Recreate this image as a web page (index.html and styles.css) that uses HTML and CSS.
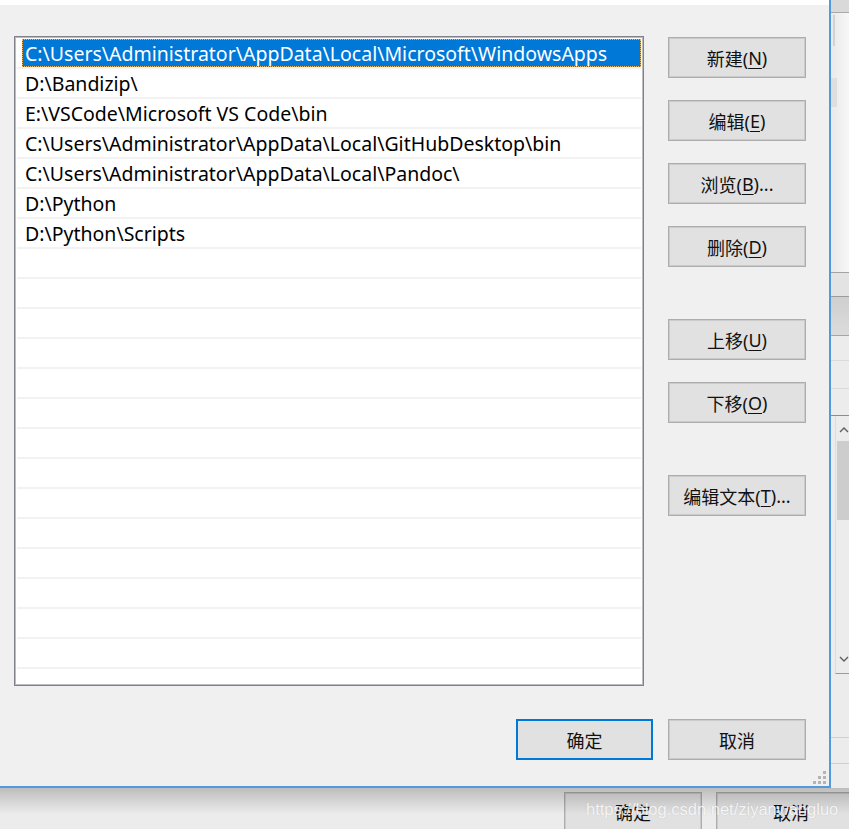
FILE: index.html
```html
<!DOCTYPE html>
<html lang="zh-CN">
<head>
<meta charset="utf-8">
<title>编辑环境变量</title>
<link rel="stylesheet" href="styles.css">
</head>
<body>
<div class="screen">
  <div class="top">
    <div class="dialog">
      <div class="strip"></div>
      <div class="body">
        <div class="listbox">
          <div class="row sel"><div class="item">C:\Users\Administrator\AppData\Local\Microsoft\WindowsApps</div></div>
          <div class="row"><div class="item">D:\Bandizip\</div></div>
          <div class="row"><div class="item">E:\VSCode\Microsoft VS Code\bin</div></div>
          <div class="row"><div class="item">C:\Users\Administrator\AppData\Local\GitHubDesktop\bin</div></div>
          <div class="row"><div class="item">C:\Users\Administrator\AppData\Local\Pandoc\</div></div>
          <div class="row"><div class="item">D:\Python</div></div>
          <div class="row"><div class="item">D:\Python\Scripts</div></div>
          <div class="row"></div><div class="row"></div><div class="row"></div><div class="row"></div>
          <div class="row"></div><div class="row"></div><div class="row"></div><div class="row"></div>
          <div class="row"></div><div class="row"></div><div class="row"></div><div class="row"></div>
          <div class="row"></div><div class="row"></div><div class="row"></div>
        </div>
        <div class="side">
          <button class="btn">新建(<u>N</u>)</button>
          <button class="btn">编辑(<u>E</u>)</button>
          <button class="btn">浏览(<u>B</u>)...</button>
          <button class="btn">删除(<u>D</u>)</button>
          <button class="btn gap-lg">上移(<u>U</u>)</button>
          <button class="btn">下移(<u>O</u>)</button>
          <button class="btn gap-lg">编辑文本(<u>T</u>)...</button>
        </div>
      </div>
      <div class="footer">
        <button class="btn default">确定</button>
        <button class="btn">取消</button>
      </div>
      <svg class="grip" width="15" height="15" viewBox="0 0 15 15">
        <rect x="11" y="1" width="3" height="3" fill="#b4b4b4"/>
        <rect x="6" y="6" width="3" height="3" fill="#b4b4b4"/>
        <rect x="11" y="6" width="3" height="3" fill="#b4b4b4"/>
        <rect x="1" y="11" width="3" height="3" fill="#b4b4b4"/>
        <rect x="6" y="11" width="3" height="3" fill="#b4b4b4"/>
        <rect x="11" y="11" width="3" height="3" fill="#b4b4b4"/>
      </svg>
    </div>
    <div class="behind">
      <div class="seg s-head"></div>
      <div class="seg s-pane"><div class="pane-line"></div><div class="pane-block"></div></div>
      <div class="seg s-a"></div>
      <div class="seg s-b"></div>
      <div class="seg s-c"></div>
      <div class="seg s-d"></div>
      <div class="seg s-e"></div>
      <div class="seg s-scroll">
        <svg class="chev" width="10" height="8" viewBox="0 0 10 8"><path d="M1 6 L5 2 L9 6" fill="none" stroke="#606060" stroke-width="1.4"/></svg>
        <div class="thumb"></div>
        <div class="track"></div>
        <svg class="chev" width="10" height="8" viewBox="0 0 10 8"><path d="M1 2 L5 6 L9 2" fill="none" stroke="#606060" stroke-width="1.4"/></svg>
      </div>
      <div class="seg s-f"></div>
      <div class="seg s-g"></div>
      <div class="seg s-h"></div>
    </div>
  </div>
  <div class="bottom">
    <div class="bbtn">确定</div>
    <div class="bbtn wide">取消</div>
    <div class="shade"></div>
    <div class="watermark">https://blog.csdn.net/ziyanwangluo</div>
  </div>
</div>
</body>
</html>
```
FILE: styles.css
```css
* { box-sizing: border-box; }
body {
  margin: 0;
  background: #ececec;
  font-family: "Noto Sans", "Noto Sans CJK SC", sans-serif;
}
.screen {
  width: 849px;
  height: 829px;
  overflow: hidden;
  position: relative;
}
.top {
  display: flex;
  height: 788px;
}
.dialog {
  width: 831px;
  height: 788px;
  flex: none;
  background: #f0f0f0;
  border-right: 2px solid #519add;
  border-bottom: 2px solid #519add;
  display: flex;
  flex-direction: column;
  position: relative;
}
.strip {
  height: 5px;
  background: #ffffff;
}
.body {
  display: flex;
  padding: 31px 0 0 14px;
}
.listbox {
  width: 630px;
  height: 650px;
  flex: none;
  background: #ffffff;
  border: 1px solid #7f8389;
  box-shadow: inset 0 0 0 1px #b9bcc1;
  padding: 2px 2px 0 2px;
  overflow: hidden;
}
.row {
  height: 30px;
  border-bottom: 2px solid #f2f2f2;
}
.item {
  margin-left: 5px;
  height: 28px;
  line-height: 30px;
  padding-left: 3px;
  font-size: 19.5px;
  color: #000;
  white-space: nowrap;
  overflow: hidden;
}
.row.sel .item {
  background: #0078d7;
  color: #ffffff;
  outline: 1px dotted #e9b56b;
  outline-offset: -1px;
}
.side {
  margin-left: 24px;
  width: 138px;
  flex: none;
  display: flex;
  flex-direction: column;
  gap: 22px;
  padding-top: 1px;
}
.btn {
  width: 138px;
  height: 41px;
  flex: none;
  padding: 0;
  background: #e1e1e1;
  border: 1px solid #adadad;
  box-shadow: inset 0 0 0 1px #cbcbcb;
  font-family: "Noto Sans", "Noto Sans CJK SC", sans-serif;
  font-size: 18px;
  color: #111;
  display: flex;
  align-items: center;
  justify-content: center;
}
.btn u {
  text-decoration-thickness: 1px;
  text-underline-offset: 3px;
}
.gap-lg { margin-top: 30px; }
.footer {
  margin-top: 33px;
  display: flex;
  justify-content: flex-end;
  gap: 15px;
  padding-right: 23px;
}
.footer .btn.default {
  width: 137px;
  border: 2px solid #0078d7;
  box-shadow: none;
}
.grip {
  position: absolute;
  right: 2px;
  bottom: 1px;
}
.behind {
  flex: 1;
  display: flex;
  flex-direction: column;
}
.seg { flex: none; }
.s-head {
  height: 13px;
  background: #d9d9d9;
  border-bottom: 1px solid #a9a9a9;
}
.s-pane {
  height: 260px;
  background: linear-gradient(to right, #e9e9e9, #f7f7f7);
  border-bottom: 1px solid #a3a3a3;
  position: relative;
}
.pane-line {
  position: absolute;
  left: 2px;
  top: 2px;
  width: 2px;
  height: 31px;
  background: #d2d2d2;
}
.pane-block {
  position: absolute;
  left: 0;
  top: 65px;
  width: 6px;
  height: 29px;
  background: #dedede;
}
.s-a {
  height: 24px;
  background: #e3e3e3;
  border-bottom: 1px solid #9d9d9d;
}
.s-b {
  height: 39px;
  background: linear-gradient(to bottom, #cfcfcf, #dcdcdc);
  border-bottom: 1px solid #a5a5a5;
}
.s-c {
  height: 25px;
  background: #ececec;
  border-bottom: 1px solid #dadada;
}
.s-d {
  height: 28px;
  background: #ececec;
  border-bottom: 1px solid #dadada;
}
.s-e {
  height: 27px;
  background: #ececec;
  border-bottom: 1px solid #8d8d8d;
}
.s-scroll {
  height: 258px;
  background: #ececec;
  border-bottom: 1px solid #9a9a9a;
  margin-left: 4px;
  border-left: 1px solid #dcdcdc;
  display: flex;
  flex-direction: column;
  align-items: flex-end;
  padding-top: 10px;
}
.chev { flex: none; margin-right: 0; }
.thumb {
  margin-top: 7px;
  width: 12px;
  height: 79px;
  background: #cdcdcd;
  flex: none;
}
.track { flex: 1; }
.s-scroll .chev:last-child { margin-bottom: 10px; }
.s-f {
  height: 64px;
  background: #ececec;
  border-bottom: 1px solid #d0d0d0;
}
.s-g {
  height: 26px;
  background: #ececec;
  border-bottom: 1px solid #d0d0d0;
}
.s-h {
  flex: 1;
  background: #ececec;
}
.bottom {
  height: 41px;
  position: relative;
  display: flex;
  gap: 14px;
  padding: 4px 0 0 564px;
  background: #ececec;
}
.bbtn {
  width: 138px;
  height: 48px;
  flex: none;
  background: #e1e1e1;
  border: 1px solid #adadad;
  box-shadow: inset 0 0 0 1px #cbcbcb;
  font-family: "Noto Sans CJK SC", sans-serif;
  font-size: 18px;
  color: #111;
  text-align: center;
  line-height: 38px;
}
.bbtn.wide { width: 150px; }
.shade {
  position: absolute;
  left: 0;
  right: 0;
  top: 0;
  height: 26px;
  background: linear-gradient(to bottom, rgba(0,0,0,0.2), rgba(0,0,0,0));
}
.watermark {
  position: absolute;
  left: 586px;
  top: 12px;
  font-family: "Liberation Sans", sans-serif;
  font-size: 16.5px;
  color: rgba(255,255,255,0.85);
  text-shadow: 0 0 1px rgba(120,120,120,0.35);
  white-space: nowrap;
}
```
